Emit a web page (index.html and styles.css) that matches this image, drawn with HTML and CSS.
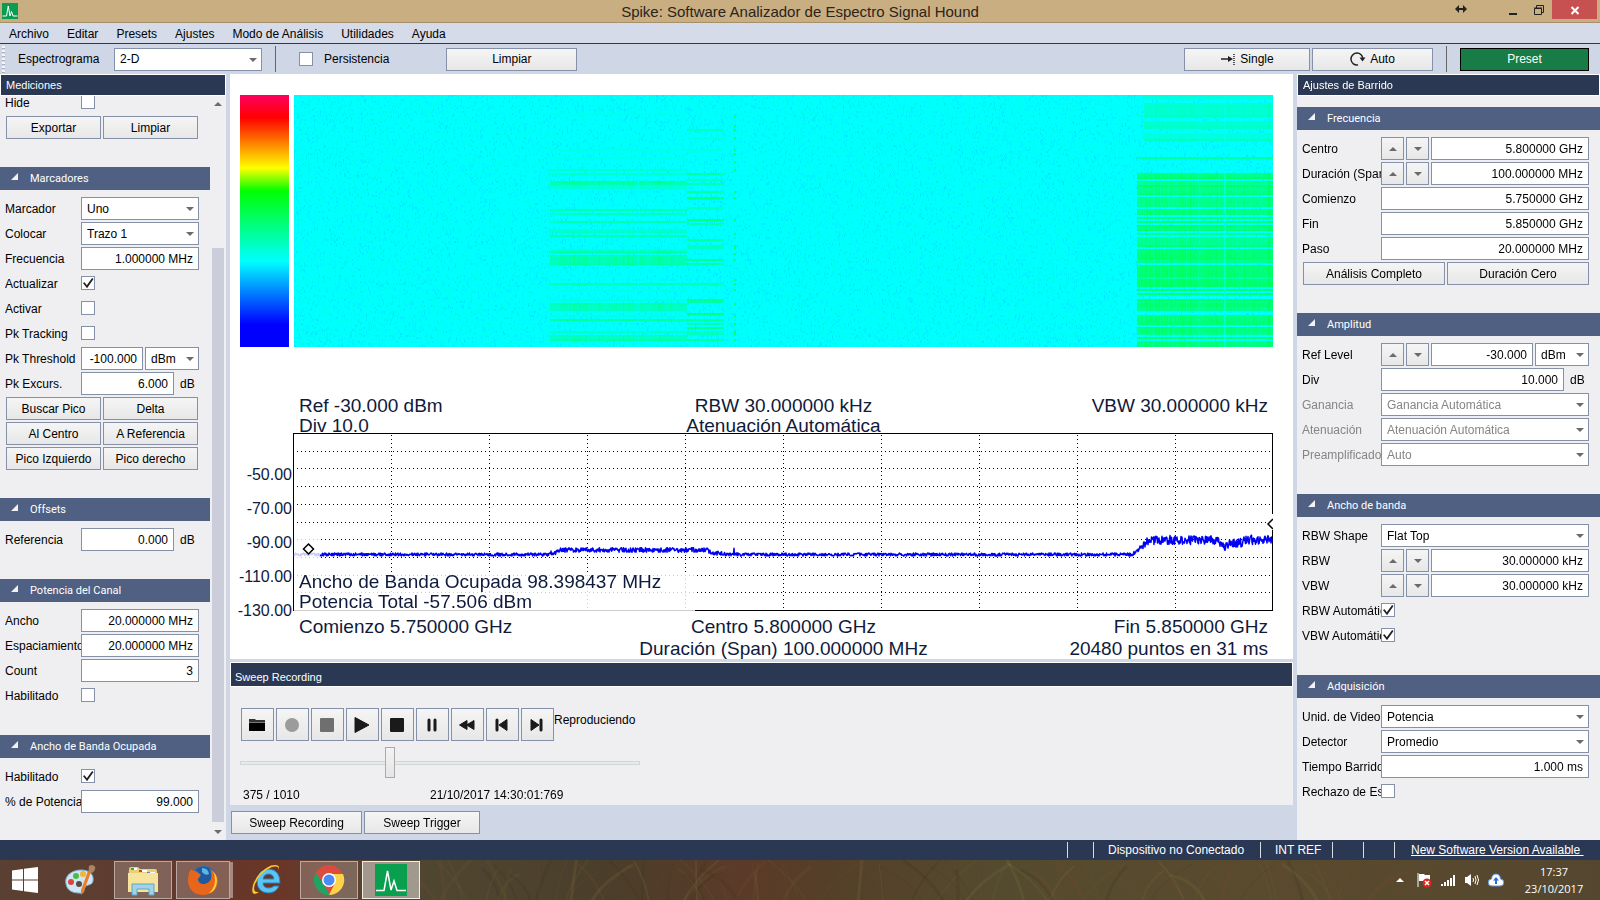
FILE: index.html
```
<!DOCTYPE html>
<html lang="es">
<head>
	<meta charset="utf-8">
	<meta name="viewport" content="width=device-width, initial-scale=1">
	<title>Spike: Software Analizador de Espectro Signal Hound</title>

	<link rel="stylesheet" href="styles.css">

</head>
<body>
	<header class="titlebar">
		<svg class="app-icon" viewBox="0 0 32 32"><rect width="32" height="32" fill="#0a9c50"/><path d="M1 26H9L12.500 6L16 26L19 17L22 26H31" fill="none" stroke="#fff" stroke-width="2"/></svg>
		<h1>Spike: Software Analizador de Espectro Signal Hound</h1>
		<div class="window-buttons">
			<svg class="resize" viewBox="0 0 12 8"><path d="M0 4L4 0V3H8V0L12 4L8 8V5H4V8Z" fill="#222"/></svg>
			<button aria-label="Minimizar"><svg viewBox="0 0 12 12"><path d="M2 9H10V11H2Z" fill="#222"/></svg></button>
			<button aria-label="Restaurar"><svg viewBox="0 0 12 12"><path d="M1.500 4.500H8.500V10.500H1.500ZM1 4H9M3.500 4V1.500H10.500V8.500H9" fill="none" stroke="#222"/></svg></button>
			<button class="close" aria-label="Cerrar"><svg viewBox="0 0 12 12"><path d="M2.500 3L9.500 10M9.500 3L2.500 10" stroke="#fff" stroke-width="2"/></svg></button>
		</div>
	</header>

	<nav class="menu">
		<a href="#">Archivo</a>
		<a href="#">Editar</a>
		<a href="#">Presets</a>
		<a href="#">Ajustes</a>
		<a href="#">Modo de Análisis</a>
		<a href="#">Utilidades</a>
		<a href="#">Ayuda</a>
	</nav>

	<div class="toolbar">
		<div class="handle"></div>
		<label for="espectrograma">Espectrograma</label>
		<span class="select wide"><select id="espectrograma"><option>2-D</option></select></span>
		<div class="sep"></div>
		<input type="checkbox" id="persistencia">
		<label for="persistencia" class="persist">Persistencia</label>
		<button class="btn clear">Limpiar</button>
		<div class="sweep-buttons">
			<button class="btn single"><svg viewBox="0 0 16 14"><path d="M1 7H10" stroke="#222" stroke-width="1.500"/><path d="M8 4L13 7L8 10Z" fill="#222"/><path d="M14 2V13" stroke="#555" stroke-width="2" stroke-dasharray="1 1"/></svg>Single</button>
			<button class="btn auto"><svg viewBox="0 0 16 14"><path d="M8 13A6 6 0 1 1 13 7" fill="none" stroke="#222" stroke-width="1.500"/><path d="M9.500 5.500H15.500L12.500 9.500Z" fill="#222"/></svg>Auto</button>
			<div class="sep"></div>
			<button class="btn preset">Preset</button>
		</div>
	</div>

	<main>
		<aside class="dock">
			<h2>Mediciones</h2>
			<div class="scroll-area">
				<div class="content left">
					<div class="group first">
						<div class="row"><label for="hide">Hide</label><input type="checkbox" id="hide"></div>
						<div class="row buttons"><button class="btn">Exportar</button><button class="btn">Limpiar</button></div>
					</div>

					<h3>Marcadores</h3>
					<div class="group">
						<div class="row"><label for="marcador">Marcador</label><span class="select"><select id="marcador"><option>Uno</option></select></span></div>
						<div class="row"><label for="colocar">Colocar</label><span class="select"><select id="colocar"><option>Trazo 1</option></select></span></div>
						<div class="row"><label for="mfrec">Frecuencia</label><input type="text" id="mfrec" value="1.000000 MHz"></div>
						<div class="row"><label for="actualizar">Actualizar</label><input type="checkbox" id="actualizar" checked></div>
						<div class="row"><label for="activar">Activar</label><input type="checkbox" id="activar"></div>
						<div class="row"><label for="pktrack">Pk Tracking</label><input type="checkbox" id="pktrack"></div>
						<div class="row"><label for="pkthr">Pk Threshold</label><input type="text" id="pkthr" value="-100.000"><span class="select unit-select"><select aria-label="Unidad"><option>dBm</option></select></span></div>
						<div class="row"><label for="pkexc">Pk Excurs.</label><input type="text" id="pkexc" value="6.000"><span class="unit">dB</span></div>
						<div class="row buttons"><button class="btn">Buscar Pico</button><button class="btn">Delta</button></div>
						<div class="row buttons"><button class="btn">Al Centro</button><button class="btn">A Referencia</button></div>
						<div class="row buttons"><button class="btn">Pico Izquierdo</button><button class="btn">Pico derecho</button></div>
					</div>

					<h3>Offsets</h3>
					<div class="group">
						<div class="row"><label for="referencia">Referencia</label><input type="text" id="referencia" value="0.000"><span class="unit">dB</span></div>
					</div>

					<h3>Potencia del Canal</h3>
					<div class="group">
						<div class="row"><label for="ancho">Ancho</label><input type="text" id="ancho" value="20.000000 MHz"></div>
						<div class="row"><label for="espaciamiento">Espaciamiento</label><input type="text" id="espaciamiento" value="20.000000 MHz"></div>
						<div class="row"><label for="count">Count</label><input type="text" id="count" value="3"></div>
						<div class="row"><label for="canal">Habilitado</label><input type="checkbox" id="canal"></div>
					</div>

					<h3>Ancho de Banda Ocupada</h3>
					<div class="group">
						<div class="row"><label for="ocupada">Habilitado</label><input type="checkbox" id="ocupada" checked></div>
						<div class="row"><label for="porc">% de Potencia</label><input type="text" id="porc" value="99.000"></div>
					</div>
				</div>
				<div class="scrollbar">
					<button class="arrow up" aria-label="Subir"></button>
					<div class="track"><div class="thumb"></div></div>
					<button class="arrow down" aria-label="Bajar"></button>
				</div>
			</div>
		</aside>

		<section class="center">
			<div class="plots">
				<div class="colorbar"></div>
				<canvas id="spectrogram" class="spectrogram" width="979" height="252"></canvas>

				<div class="info top">
					<span>Ref -30.000 dBm</span><span>RBW 30.000000 kHz</span><span>VBW 30.000000 kHz</span>
					<span>Div 10.0</span><span>Atenuación Automática</span><span></span>
				</div>

				<div class="axis">
					<span>-50.00</span><span>-70.00</span><span>-90.00</span><span>-110.00</span><span>-130.00</span>
				</div>
				<div class="chart">
					<svg id="trace" viewBox="0 0 980 178" preserveAspectRatio="none">
						<g id="grid" stroke="#000" stroke-dasharray="1 3" shape-rendering="crispEdges"></g>
						<rect x="0.500" y="0.500" width="979" height="177" fill="none" stroke="#000"/>
						<path id="line" fill="none" stroke="#0000f5" stroke-width="1.500" stroke-linejoin="round"/>
						<!-- marker backgrounds -->
						<rect x="1" y="98" width="26" height="40" fill="#fff" opacity="0.8"/>
						<rect x="974" y="81" width="6" height="16" fill="#fff"/>
						<path d="M15.500 111L20.500 116L15.500 121L10.500 116Z" fill="#fff" stroke="#000" stroke-width="1.500"/>
						<path d="M980 86L975 91L980 96" fill="#fff" stroke="#000" stroke-width="1.500"/>
					</svg>
					<div class="occupied">
						<div>Ancho de Banda Ocupada 98.398437 MHz</div>
						<div>Potencia Total -57.506 dBm</div>
					</div>
				</div>

				<div class="info bottom">
					<span>Comienzo 5.750000 GHz</span><span>Centro 5.800000 GHz</span><span>Fin 5.850000 GHz</span>
					<span></span><span>Duración (Span) 100.000000 MHz</span><span>20480 puntos en 31 ms</span>
				</div>
			</div>

			<div class="recording">
				<h2>Sweep Recording</h2>
				<div class="player">
					<div class="controls">
						<button class="btn" aria-label="Abrir"><svg viewBox="0 0 18 18"><path d="M1 3H7L8 4H17V6H1Z" fill="#333"/><path d="M1 6.500H17V15H1Z" fill="#000"/></svg></button>
						<button class="btn" aria-label="Grabar"><svg viewBox="0 0 18 18"><circle cx="9" cy="9" r="7" fill="#9b9b9b"/></svg></button>
						<button class="btn" aria-label="Detener grabación"><svg viewBox="0 0 18 18"><rect x="2" y="2" width="14" height="14" rx="1" fill="#6f6f6f"/></svg></button>
						<button class="btn" aria-label="Reproducir"><svg viewBox="0 0 18 18"><path d="M2 1.500L16 9L2 16.500Z" fill="#1a1a1a" stroke="#1a1a1a" stroke-linejoin="round"/></svg></button>
						<button class="btn" aria-label="Detener"><svg viewBox="0 0 18 18"><rect x="2" y="2" width="14" height="14" rx="1" fill="#1a1a1a"/></svg></button>
						<button class="btn" aria-label="Pausa"><svg viewBox="0 0 18 18"><path d="M6 4V14M12 4V14" stroke="#1a1a1a" stroke-width="3" stroke-linecap="round"/></svg></button>
						<button class="btn" aria-label="Retroceder"><svg viewBox="0 0 18 18"><path d="M1.500 9L9 4.500V13.500ZM8.500 9L16 4.500V13.500Z" fill="#1a1a1a" stroke="#1a1a1a" stroke-linejoin="round"/></svg></button>
						<button class="btn" aria-label="Anterior"><svg viewBox="0 0 18 18"><path d="M4 4V14" stroke="#1a1a1a" stroke-width="3" stroke-linecap="round"/><path d="M6 9L14 3.500V14.500Z" fill="#1a1a1a" stroke="#1a1a1a" stroke-linejoin="round"/></svg></button>
						<button class="btn" aria-label="Siguiente"><svg viewBox="0 0 18 18"><path d="M13 4V14" stroke="#1a1a1a" stroke-width="3" stroke-linecap="round"/><path d="M11 9L3 3.500V14.500Z" fill="#1a1a1a" stroke="#1a1a1a" stroke-linejoin="round"/></svg></button>
						<span class="state">Reproduciendo</span>
					</div>
					<input type="range" class="position" min="0" max="1010" value="375" aria-label="Posición">
					<div class="times"><span>375 / 1010</span><span>21/10/2017 14:30:01:769</span></div>
				</div>
			</div>
			<div class="tabs"><button class="btn tab-a">Sweep Recording</button><button class="btn tab-b">Sweep Trigger</button></div>
		</section>

		<aside class="dock">
			<h2>Ajustes de Barrido</h2>
			<div class="content right">
				<h3>Frecuencia</h3>
				<div class="group">
					<div class="row"><label for="centro">Centro</label><button class="btn step up" aria-label="Subir"></button><button class="btn step down" aria-label="Bajar"></button><input type="text" id="centro" value="5.800000 GHz"></div>
					<div class="row"><label for="span">Duración (Span)</label><button class="btn step up" aria-label="Subir"></button><button class="btn step down" aria-label="Bajar"></button><input type="text" id="span" value="100.000000 MHz"></div>
					<div class="row"><label for="comienzo">Comienzo</label><input type="text" id="comienzo" value="5.750000 GHz"></div>
					<div class="row"><label for="fin">Fin</label><input type="text" id="fin" value="5.850000 GHz"></div>
					<div class="row"><label for="paso">Paso</label><input type="text" id="paso" value="20.000000 MHz"></div>
					<div class="row buttons"><button class="btn">Análisis Completo</button><button class="btn">Duración Cero</button></div>
				</div>

				<h3>Amplitud</h3>
				<div class="group">
					<div class="row"><label for="ref">Ref Level</label><button class="btn step up" aria-label="Subir"></button><button class="btn step down" aria-label="Bajar"></button><input type="text" id="ref" value="-30.000"><span class="select unit-select"><select aria-label="Unidad"><option>dBm</option></select></span></div>
					<div class="row"><label for="div">Div</label><input type="text" id="div" value="10.000"><span class="unit">dB</span></div>
					<div class="row off"><label for="ganancia">Ganancia</label><span class="select"><select id="ganancia" disabled><option>Ganancia Automática</option></select></span></div>
					<div class="row off"><label for="atenuacion">Atenuación</label><span class="select"><select id="atenuacion" disabled><option>Atenuación Automática</option></select></span></div>
					<div class="row off"><label for="preamp">Preamplificador</label><span class="select"><select id="preamp" disabled><option>Auto</option></select></span></div>
				</div>

				<h3>Ancho de banda</h3>
				<div class="group">
					<div class="row"><label for="shape">RBW Shape</label><span class="select"><select id="shape"><option>Flat Top</option></select></span></div>
					<div class="row"><label for="rbw">RBW</label><button class="btn step up" aria-label="Subir"></button><button class="btn step down" aria-label="Bajar"></button><input type="text" id="rbw" value="30.000000 kHz"></div>
					<div class="row"><label for="vbw">VBW</label><button class="btn step up" aria-label="Subir"></button><button class="btn step down" aria-label="Bajar"></button><input type="text" id="vbw" value="30.000000 kHz"></div>
					<div class="row"><label for="rbwauto">RBW Automático</label><input type="checkbox" id="rbwauto" checked></div>
					<div class="row"><label for="vbwauto">VBW Automático</label><input type="checkbox" id="vbwauto" checked></div>
				</div>

				<h3>Adquisición</h3>
				<div class="group">
					<div class="row"><label for="video">Unid. de Video</label><span class="select"><select id="video"><option>Potencia</option></select></span></div>
					<div class="row"><label for="detector">Detector</label><span class="select"><select id="detector"><option>Promedio</option></select></span></div>
					<div class="row"><label for="tiempo">Tiempo Barrido</label><input type="text" id="tiempo" value="1.000 ms"></div>
					<div class="row"><label for="rechazo">Rechazo de Espurias</label><input type="checkbox" id="rechazo"></div>
				</div>
			</div>
		</aside>
	</main>

	<div class="status">
		<span class="empty"></span>
		<span class="device">Dispositivo no Conectado</span>
		<span class="refclock">INT REF</span>
		<span class="empty"></span>
		<span class="empty"></span>
		<span class="version"><a href="#">New Software Version Available&nbsp;</a></span>
	</div>

	<footer class="taskbar">
		<svg class="grass" viewBox="0 0 1600 40" preserveAspectRatio="none" id="grass"></svg>
		<button class="task" aria-label="Inicio"><svg viewBox="0 0 32 32"><path d="M3 6.500L14 5V15.500H3ZM15 4.800L29 3V15.500H15ZM3 16.500H14V27L3 25.500ZM15 16.500H29V29L15 27.200Z" fill="#fff"/></svg></button>
		<button class="task" aria-label="Paint"><svg viewBox="0 0 32 32"><path d="M2 20C0 11 9 6 17 6C26 6 30 11 29 17C28 22 23 20 21 23C19 27 21 30 15 29C8 29 3 26 2 20Z" fill="#cfe6f5" stroke="#7fb0d0"/><circle cx="7" cy="18" r="3" fill="#d8473b"/><circle cx="12" cy="12" r="3" fill="#51b848"/><circle cx="19" cy="10" r="3" fill="#f2b632"/><circle cx="15" cy="20" r="3" fill="#5b4b40"/><path d="M27 8L20 27L17 31L17 26L24 7Z" fill="#ea7f28"/><path d="M24 8C26 4 23 2 27 1C32 1 33 5 28 9Z" fill="#a98562"/></svg></button>
		<button class="task open explorer" aria-label="Explorador"><svg viewBox="0 0 32 32"><path d="M2 5Q2 3 4 3H11L13 5H28Q30 5 30 7V27H1Z" fill="#e8cf78"/><path d="M4 4H10V6H4ZM14 6H20V8H14ZM22 8H28V10H22Z" fill="#fff"/><path d="M4 4H7V6H4Z" fill="#2fae3b"/><path d="M12 6H15V8H12Z" fill="#d04030"/><path d="M20 8H23V10H20Z" fill="#3f8fe0"/><path d="M1 9H31V28H1Z" fill="#f6e49c"/><path d="M5 31V20H27V31H22V25H10V31Z" fill="#9fd3ea" stroke="#5fa5c6"/></svg></button>
		<button class="task open stacked" aria-label="Firefox"><svg viewBox="0 0 32 32"><circle cx="17" cy="15" r="13" fill="#2a6cb3"/><path d="M15 4Q22 4 24 10Q20 13 16 9Z" fill="#5bb6e8"/><path d="M2 9Q4 4 5 6Q9 7 13 10L15 13L11 15Q11 20 17 20Q22 19 24 15Q25 9 23 5Q31 10 31 17Q30 30 17 31Q3 31 1 18Q1 12 2 9Z" fill="#e8651c"/><path d="M24 15Q25 9 22 4Q12 1 9 6L14 11L11 15Q12 20 17 20Q22 19 24 15Z" fill="#215a9c"/><path d="M15 4Q21 4 22 10Q18 12 15 8Z" fill="#5bb6e8"/><path d="M26 7Q32 14 29 22Q27 28 22 29Q28 24 28 16Q28 11 26 7Z" fill="#fbd136"/></svg></button>
		<button class="task" aria-label="Internet Explorer"><svg viewBox="0 0 32 32"><path d="M29 19H12Q12 24 18 24Q21 24 23 22H28Q25 29 17 29Q6 28 6 17Q7 6 18 5Q29 6 29 19ZM12 15H23Q22 10 17.500 10Q13 10 12 15Z" fill="#5cc4f1" stroke="#2288c8" fill-rule="evenodd"/><path d="M27 8Q30 1 21 3Q9 8 4 20Q1 29 8 28Q-1 34 2 21Q7 7 20 1.500Q31 -1 27 8Z" fill="#f8c82c"/></svg></button>
		<button class="task open" aria-label="Chrome"><svg viewBox="0 0 32 32"><circle cx="16" cy="16" r="15" fill="#dd4b3e"/><path d="M3 8.500L11 21L17 31A15 15 0 0 1 3 8.500Z" fill="#1fa463"/><path d="M30 10H16L22 19L16 31A15 15 0 0 0 30 10Z" fill="#fdd34b"/><circle cx="16" cy="16" r="7" fill="#fff"/><circle cx="16" cy="16" r="5.500" fill="#4c8bf5"/></svg></button>
		<button class="task open active" aria-label="Spike"><svg viewBox="0 0 32 32"><rect width="32" height="32" fill="#08a04f"/><path d="M1 26.500H9L12.500 7L16 26L19 17L22 26.500H31" fill="none" stroke="#fff" stroke-width="1.500"/></svg></button>

		<div class="tray">
			<svg viewBox="0 0 16 16"><path d="M4 10L8 6L12 10Z" fill="#fff"/></svg>
			<svg viewBox="0 0 16 16"><path d="M2 1V15" stroke="#fff"/><path d="M3 2H8L9 3H14V9H3Z" fill="#fff"/><circle cx="11" cy="11" r="4.500" fill="#d9261c"/><path d="M9 9L13 13M13 9L9 13" stroke="#fff" stroke-width="1.500"/></svg>
			<svg viewBox="0 0 16 16"><path d="M2 14V12M5 14V10M8 14V8M11 14V6M14 14V3" stroke="#fff" stroke-width="2"/></svg>
			<svg viewBox="0 0 16 16"><path d="M1 5H3L7 2V14L3 11H1Z" fill="#fff"/><path d="M9 6Q10 8 9 10M11 4Q13 8 11 12M13 3Q16 8 13 13" fill="none" stroke="#fff"/></svg>
			<svg viewBox="0 0 16 16"><path d="M4 14A3.500 3.500 0 0 1 3.500 7Q4 2 8 2Q12 2 12.500 7A3.500 3.500 0 0 1 12 14Z" fill="#fff" stroke="#5b95e8"/><path d="M8 5L11 8.500H9V12H7V8.500H5Z" fill="#2a6fe0"/></svg>
		</div>
		<div class="clock"><span>17:37</span><span>23/10/2017</span></div>
	</footer>

	<script src="script.js"></script>
</body>
</html>
```
FILE: styles.css
```
* {box-sizing: border-box;}

body {margin: 0;
	display: flex;
	flex-direction: column;
	height: 100vh;
	overflow: hidden;
	background: #cfd6e6;
	color: #000;
	font-family: "Liberation Sans", Arial, sans-serif;
	font-size: 12px;
}

h1, h2, h3 {margin: 0; font-weight: normal;}
button, input, select {font: inherit; color: inherit; margin: 0; border-radius: 0;}
svg {display: block;}

/* title bar */
.titlebar {
	display: grid;
	grid-template-columns: 1fr auto 1fr;
	height: 23px;
	background: #c9ae82;
	border-bottom: 1px solid #a68f6b;
}
.app-icon {width: 16px; height: 16px; margin: 3px 0 0 2px;}
.titlebar h1 {font-size: 15px; line-height: 24px; color: #2b2419;}
.window-buttons {display: flex; justify-content: flex-end; padding-right: 3px;}
.window-buttons button {
	display: flex;
	justify-content: center;
	align-items: center;
	width: 26px;
	height: 19px;
	padding: 0;
	border: 0;
	background: none;
}
.window-buttons button svg {width: 12px; height: 12px;}
.window-buttons .close {width: 45px; background: #c75050;}
.resize {width: 12px; height: 8px; margin: 5px 33px 0 0;}

/* menu + toolbar */
.menu {
	display: flex;
	gap: 18px;
	height: 21px;
	padding: 1px 0 0 9px;
	line-height: 20px;
	background: #d5dbe8;
	border-bottom: 1px solid #2f3b3b;
}
.menu a {color: #000; text-decoration: none;}

.toolbar {
	display: flex;
	align-items: center;
	height: 30px;
	padding: 0 11px 0 2px;
	background: #cfd6e6;
}
.handle {width: 3px; height: 27px; margin-right: 13px; background: repeating-linear-gradient(#f4f6fa 0 2px, #a9b1c2 2px 3px, #cfd6e6 3px 4px);}
.toolbar .wide {flex: 0 0 148px; margin-left: 15px;}
.toolbar label:first-of-type {width: 81px;}
.sep {width: 1px; height: 26px; margin: 0 13px; background: #666;}
.toolbar > .sep {margin-right: 23px;}
.persist {margin-left: 11px;}
.clear {width: 131px; margin-left: 57px;}
.sweep-buttons {display: flex; align-items: center; margin-left: auto;}
.sweep-buttons svg {width: 16px; height: 14px; margin-right: 4px;}
.single {width: 126px; margin-right: 2px;}
.auto {width: 121px;}

.btn {
	display: flex;
	justify-content: center;
	align-items: center;
	height: 23px;
	padding: 0;
	white-space: nowrap;
	background: linear-gradient(#f5f5f5, #e7e7e7);
	border: 1px solid #8491a8;
}
.btn.preset {width: 129px; color: #fff; background: #177c45; border-color: #000;}

/* form pieces */
input[type=text] {
	flex: 1;
	min-width: 0;
	width: 0;
	height: 23px;
	padding: 0 5px;
	text-align: right;
	background: #fff;
	border: 1px solid #8491a8;
}
input[type=checkbox] {
	appearance: none;
	flex: none;
	width: 14px;
	height: 14px;
	background: #fff;
	border: 1px solid #8491a8;
}
.row input[type=checkbox] {margin-bottom: 1px;}
input[type=checkbox]:checked::after {
	content: "";
	display: block;
	width: 12px;
	height: 12px;
	background: #222;
	clip-path: polygon(8% 50%, 22% 44%, 40% 68%, 84% 8%, 96% 16%, 42% 94%);
}
.select {position: relative; display: flex; flex: 1;}
.select select {
	appearance: none;
	width: 100%;
	height: 23px;
	padding: 0 5px;
	background: #fff;
	border: 1px solid #8491a8;
	opacity: 1;
}
.select::after {
	content: "";
	position: absolute;
	right: 5px;
	top: 10px;
	border: 4px solid transparent;
	border-top-color: #6b6b6b;
	border-bottom: 0;
	pointer-events: none;
}
.unit-select {flex: 0 0 54px;}
.unit {flex: 0 0 23px; padding-left: 4px;}

/* docks */
main {
	flex: 1;
	display: grid;
	grid-template-columns: 226px 1fr 303px;
	gap: 4px;
	min-height: 0;
}
.dock {display: flex; flex-direction: column; min-width: 0; min-height: 0; background: #efeff1;}
h2 {
	height: 22px;
	padding-left: 5px;
	font-size: 11px;
	line-height: 20px;
	color: #fff;
	background: #2a3854;
	border: 1px solid #fff;
}
h3 {
	position: relative;
	height: 23px;
	padding-left: 30px;
	font-family: Roboto, "Open Sans", sans-serif;
	font-size: 11px;
	line-height: 24px;
	color: #fff;
	background: #4f6082;
}
h3::before {
	content: "";
	position: absolute;
	left: 11px;
	top: 6px;
	width: 7px;
	height: 7px;
	background: #f2f2f2;
	clip-path: polygon(100% 0, 100% 100%, 0 100%);
}
.scroll-area {flex: 1; display: flex; gap: 2px; min-height: 0; overflow: hidden;}
.left {flex: 0 0 210px;}
.right {padding-top: 11px; overflow: hidden;}
.group {display: flex; flex-direction: column; gap: 2px; padding: 7px 11px 28px 5px;}
.group.first {margin-top: -5px; padding-top: 0;}
.row {display: flex; align-items: center; gap: 2px; height: 23px;}
.row label {flex: 0 0 76px; margin-right: -2px; overflow: hidden; white-space: nowrap;}
.right .row label {flex-basis: 79px;}
.row.buttons {padding: 0 1px;}
.right .row.buttons {padding-right: 0;}
.buttons .btn {flex: 1 1 0;}
.off {color: #858585;}
.off select {color: #858585;}
.step {flex: 0 0 23px;}
.step::before, .arrow::before {content: ""; border: 4px solid transparent;}
.up::before {border-bottom-color: #6b6b6b; border-top: 0;}
.down::before {border-top-color: #6b6b6b; border-bottom: 0;}

.scrollbar {flex: 0 0 12px; display: flex; flex-direction: column;}
.arrow {display: flex; justify-content: center; align-items: center; height: 16px; padding: 0; border: 0; background: none;}
.track {flex: 1; display: flex; flex-direction: column; padding-bottom: 2px;}
.track::before {content: ""; flex: 136;}
.thumb {flex: 574; background: #cbcddb;}

/* plots */
.center {display: flex; flex-direction: column; min-width: 0; min-height: 0;}
.plots {
	flex: 1;
	display: grid;
	grid-template-columns: 63px 1fr;
	grid-template-rows: 252fr 86px 178fr 48px;
	min-height: 0;
	padding: 21px 20px 0 0;
	background: #fff;
	color: #0f1a3c;
}
.colorbar {
	margin: 0 4px 0 10px;
	background: linear-gradient(#ff0060 0%, #ff0000 9%, #ffff00 29%, #00ff00 38%, #00ffff 66%, #0000ff 91%);
}
.spectrogram {display: block; width: 100%; height: 100%; min-height: 0; padding-left: 1px;}
.info {
	grid-column: 2;
	display: grid;
	grid-template-columns: 1fr auto 1fr;
	padding: 0 5px 0 6px;
	font-size: 19px;
	white-space: nowrap;
}
.info span:nth-child(3n+2) {text-align: center;}
.info span:nth-child(3n) {text-align: right;}
.info.top {padding-top: 49px; line-height: 20px;}
.info.bottom {padding-top: 5px; line-height: 22px;}
.axis {
	display: flex;
	flex-direction: column;
	justify-content: flex-end;
	margin-bottom: -17px;
	padding-right: 1px;
	font-size: 16px;
	line-height: 34px;
	text-align: right;
}
.chart {position: relative; min-height: 0;}
.chart svg {width: 100%; height: 100%;}
.occupied {
	position: absolute;
	left: 1px;
	bottom: -1px;
	width: 401px;
	padding-left: 5px;
	font-size: 19px;
	line-height: 20px;
	white-space: nowrap;
	background: rgba(255, 255, 255, 0.8);
}

/* recorder */
.recording {margin-top: 3px; background: #efeff1;}
.recording h2 {height: 25px; padding: 4px 0 0 4px;}
.player {width: 410px; padding: 21px 0 1px 10px;}
.controls {display: flex; gap: 2px; padding-left: 1px;}
.controls .btn {flex: 0 0 33px; height: 33px; padding-right: 1px;}
.controls svg {width: 18px; height: 18px;}
.state {width: 82px; margin-left: -2px; line-height: 24px; overflow: hidden;}
.position {
	appearance: none;
	display: block;
	width: 100%;
	height: 31px;
	margin: 6px 0 8px;
	background: none;
}
.position::-webkit-slider-runnable-track {height: 4px; background: #e7eaea; border: 1px solid #d3d6d6;}
.position::-webkit-slider-thumb {
	appearance: none;
	width: 10px;
	height: 31px;
	margin-top: -15px;
	background: linear-gradient(#f3f3f3, #e5e5e5);
	border: 1px solid #aaa;
}
.times {display: grid; grid-template-columns: 187px 1fr; padding-left: 3px; line-height: 18px;}
.tabs {display: flex; gap: 2px; padding: 6px 1px;}
.tab-a {width: 131px;}
.tab-b {width: 116px;}

/* status bar */
.status {
	display: flex;
	justify-content: flex-end;
	height: 20px;
	padding: 2px 13px 2px 0;
	line-height: 17px;
	color: #fff;
	background: #2a3854;
}
.status span {border-left: 1px solid #d8dce4;}
.status .empty {width: 31px;}
.status .empty:first-child {width: 26px;}
.status .device {width: 167px; padding-left: 14px;}
.status .refclock {width: 72px; padding-left: 14px;}
.status .version {width: 193px; padding-left: 16px;}
.status a {color: #fff;}

/* taskbar */
.taskbar {
	position: relative;
	display: flex;
	align-items: center;
	gap: 4px;
	height: 40px;
	color: #fff;
	background: linear-gradient(90deg, #5a4032 0%, #5e3d30 7%, #64382c 13%, #6b3526 17%, #5f4030 21%, #4f4630 27%, #4a3e2a 38%, #5b3a28 46%, #553f28 52%, #544a2f 62%, #5a4a2e 78%, #55472f 100%);
}
.grass {position: absolute; left: 0; top: 0; width: 100%; height: 100%;}
.task {
	position: relative;
	display: flex;
	justify-content: center;
	align-items: center;
	width: 58px;
	height: 38px;
	padding: 0;
	border: 0;
	background: none;
}
.task:nth-of-type(1) {width: 50px;}
.task:nth-of-type(2) {width: 52px;}
.task svg {width: 32px; height: 32px;}
.task.open {border: 1px solid rgba(255, 255, 255, 0.45); background: rgba(255, 255, 255, 0.2);}
.task.explorer {margin-left: 4px;}
.task.stacked {width: 54px; margin-right: 4px; box-shadow: 4px 0 0 -1px #a58a80;}
.task.active {border-color: #f0eee8; background: rgba(255, 255, 255, 0.45);}
.tray {position: relative; display: flex; gap: 8px; margin-left: auto;}
.tray svg {width: 16px; height: 16px;}
.clock {
	position: relative;
	display: flex;
	flex-direction: column;
	align-items: center;
	width: 92px;
	font-family: "Open Sans", "Noto Sans", sans-serif;
	font-size: 11px;
	line-height: 17px;
}
```
FILE: script.js
```
let seed = 7;
function rnd() {
	seed = (seed * 16807) % 2147483647;
	return seed / 2147483647;
}

// bursts in the waterfall: [first row, rows, level], one row is 2px
const bandA = [[9,1,.1],[27,1,.15],[31,1,.12],[37,1,.3],[39,1,.3],[43,1,.6],[44,1,.5],[45,2,.25],[57,1,.5],[59,1,.4],[63,1,.5],[67,1,.3],[68,1,.35],[70,1,.5],[77,1,.3],[78,1,.6],[80,4,.5],[84,1,.6],[94,1,.5],[97,1,.12],[102,1,.2],[104,1,.5],[105,3,.42],[110,1,.2],[112,1,.6],[118,1,.35],[120,2,.4],[122,1,.6]];
const bandB = [[17,1,.4],[21,1,.2],[27,1,.2],[39,1,.6],[42,1,.4],[44,1,.5],[48,1,.6],[51,1,.8],[56,1,.4],[62,1,.8],[64,1,.5],[72,1,.6],[75,2,.4],[82,1,.7],[84,1,.6],[94,1,.5],[102,1,.7],[103,1,.5],[109,1,.8],[112,1,.6],[114,1,.5],[116,1,.7],[118,2,.4],[122,1,.6]];
const bandC = [[0,2,.2],[4,6,.3],[10,1,.4],[13,2,.3],[15,2,.35],[19,3,.22],[22,1,.4],[31,1,.6],[39,2,.8],[41,1,1],[43,1,.8],[44,1,.6],[45,1,1],[46,3,.75],[49,1,.95],[51,5,.75],[57,3,.85],[61,1,.9],[63,1,.9],[65,1,1],[66,1,.75],[67,1,.9],[69,1,.7],[71,4,.7],[75,1,.9],[77,4,.9],[81,1,1],[82,2,.75],[85,6,.9],[91,1,.6],[92,4,.95],[97,1,.9],[99,1,.9],[102,1,1],[103,1,.75],[104,2,.9],[106,2,.75],[110,3,.85],[113,2,.9],[116,3,.85],[119,1,.7],[121,1,.9],[123,3,.85]];
const dots = [10,15,17,21,27,29,33,37,48,51,62,69,75,76,79,82,92,94,97,104,110,114,118,119,122];

function level(list, row) {
	for (const b of list) {
		if (row >= b[0] && row < b[0] + b[1]) return b[2];
	}
	return 0;
}

function drawSpectrogram() {
	const ctx = document.getElementById('spectrogram').getContext('2d');
	// every column keeps its own gain, so bursts get vertical streaks
	const gain = [];
	for (let x = 0; x < 979; x++) gain.push(.8 + rnd() * .3 + (rnd() > .93 ? .35 : 0));

	for (let row = 0; row < 126; row++) {
		const a = level(bandA, row), b = level(bandB, row), c = level(bandC, row);
		for (let x = 0; x < 979; x++) {
			let v = 0;
			if (x >= 256 && x < 393) v = a;
			if (x >= 393 && x < 430) v = b;
			if (x >= (c > .5 ? 843 : 850)) v = c;
			if (x === 344 || x === 930 || x === 931) v *= .5;
			if (v) v = Math.min(1, v * gain[x] * (.85 + rnd() * .25));
			if ((x === 440 || x === 441) && dots.includes(row)) v = .9;
			const n = rnd();
			let g = 255, bl = 255 - v * 165;
			if (!v && n > .82) g = 255 - (n - .82) * 130;
			if (!v && n < .2) bl = 243;
			ctx.fillStyle = `rgb(0,${g | 0},${bl | 0})`;
			ctx.fillRect(x, row * 2, 1, 2);
		}
	}
}

function drawGrid() {
	let html = '';
	for (let i = 1; i < 10; i++) {
		html += `<path d="M${i * 98 + .5} 2V177"/>`;
		html += `<path d="M4 ${Math.round(i * 17.7) + .5}H978"/>`;
	}
	document.getElementById('grid').innerHTML = html;
}

function drawTrace() {
	let d = '';
	for (let x = 0; x <= 979; x += .5) {
		let y = 121.5, amp = 1.5;
		if (x > 256 && x < 432) {
			y = x < 264 ? 119.5 : x > 415 ? 118.5 + (x - 415) * .15 : 117;
			amp = 2.3;
		}
		if (x >= 840) {
			y = x < 856 ? 121 - (x - 840) * .85 : 107;
			amp = x < 850 ? 2 : 4.5;
			if (x > 925 && x < 936) y = 115 - Math.abs(x - 931);
			if (x >= 936 && x < 950) y = 110;
			if (x > 853 && rnd() > .97) y -= 5;
		}
		if (x === 441) y = 114;
		y += (rnd() - .5) * 2 * amp;
		d += (x ? 'L' : 'M') + x + ' ' + y.toFixed(1);
	}
	document.getElementById('line').setAttribute('d', d);
}

// blades of grass behind the taskbar
function drawGrass() {
	let html = '';
	for (let i = 0; i < 90; i++) {
		const x = 430 + rnd() * 950, lean = (rnd() - .5) * 90;
		const color = ['#7a7440', '#3a3220', '#6b5a34', '#7a4a32'][i % 4];
		html += `<path d="M${x | 0} 42Q${(x + lean * .3) | 0} 20 ${(x + lean) | 0} ${(rnd() * 20 - 4) | 0}" fill="none" stroke="${color}" stroke-width="${1 + (i % 3)}" opacity=".22"/>`;
	}
	document.getElementById('grass').innerHTML = html;
}

drawSpectrogram();
drawGrid();
drawTrace();
drawGrass();
```
